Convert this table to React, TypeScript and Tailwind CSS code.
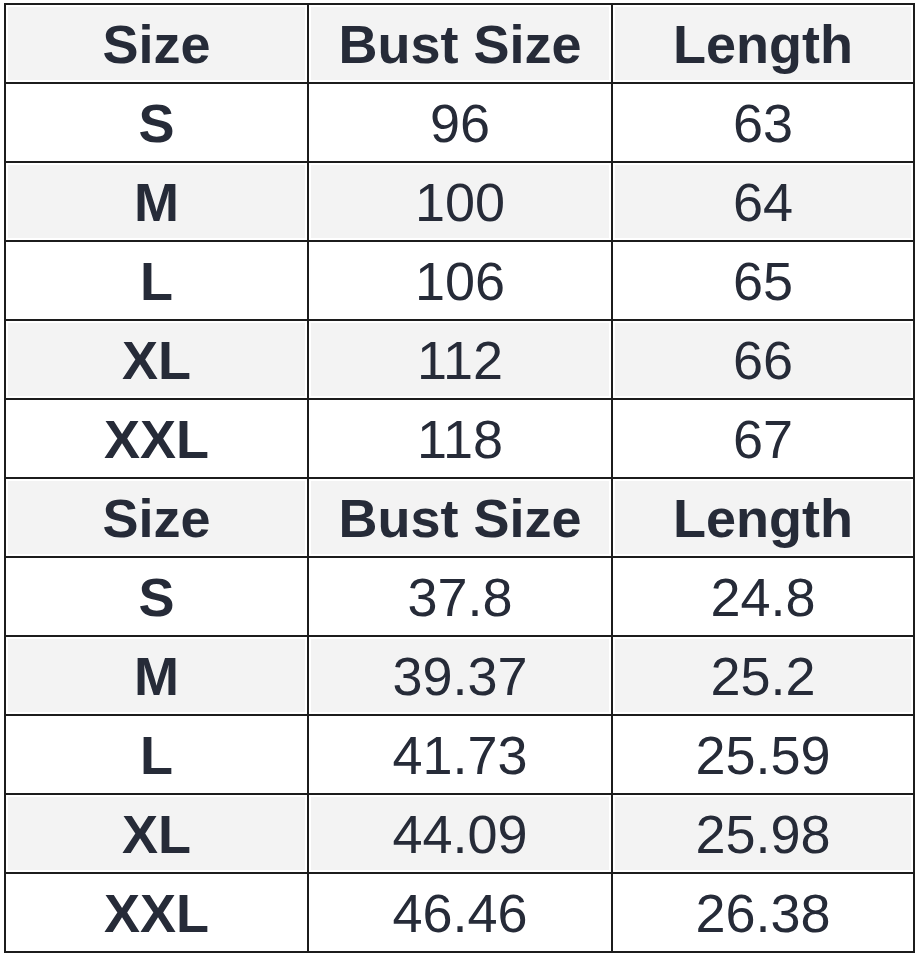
const header = ["Size", "Bust Size", "Length"];

const cmRows = [
  ["S", "96", "63"],
  ["M", "100", "64"],
  ["L", "106", "65"],
  ["XL", "112", "66"],
  ["XXL", "118", "67"],
];

const inchRows = [
  ["S", "37.8", "24.8"],
  ["M", "39.37", "25.2"],
  ["L", "41.73", "25.59"],
  ["XL", "44.09", "25.98"],
  ["XXL", "46.46", "26.38"],
];

type Row = { cells: string[]; head: boolean };

const rows: Row[] = [
  { cells: header, head: true },
  ...cmRows.map((cells) => ({ cells, head: false })),
  { cells: header, head: true },
  ...inchRows.map((cells) => ({ cells, head: false })),
];

export default function App() {
  return (
    <div className="min-h-screen bg-white pt-[3px] pl-[4px]">
      <div
        className="grid w-[911px] grid-cols-[303px_304px_302px] border-l-2 border-t-2 border-[#1c1c1c] text-[54px] leading-none text-[#262b38]"
        style={{ fontFamily: '"Liberation Sans", Arial, sans-serif' }}
      >
        {rows.map((row, i) => {
          const gray = i % 2 === 0;
          return row.cells.map((c, j) => (
            <div
              key={`${i}-${j}`}
              className="flex h-[79px] border-b-2 border-r-2 border-[#1c1c1c] p-[2px]"
            >
              <div
                className={`flex flex-1 items-center justify-center ${
                  gray ? "bg-[#f3f3f3]" : "bg-white"
                } ${row.head || j === 0 ? "font-bold" : "font-normal"}`}
              >
                {c}
              </div>
            </div>
          ));
        })}
      </div>
    </div>
  );
}
